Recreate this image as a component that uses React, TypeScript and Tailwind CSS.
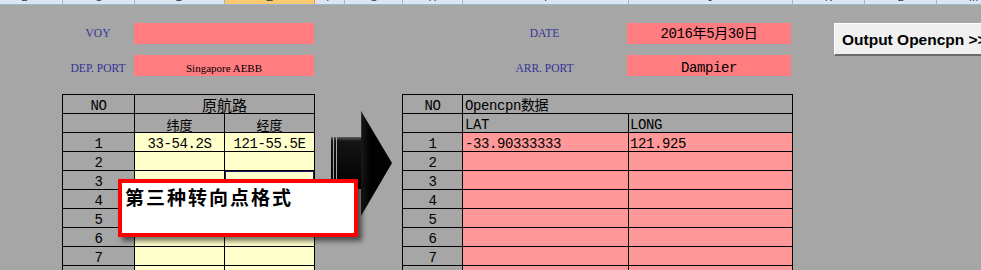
import React from 'react';

const mono =
  "font-['Liberation_Mono','Noto_Sans_CJK_SC',monospace] text-[14px] tracking-[-0.4px] leading-[14px] text-black whitespace-nowrap";
const cjk = "font-['Noto_Sans_CJK_SC',sans-serif] text-black whitespace-nowrap";
const label =
  "font-['Liberation_Serif',serif] text-[11.5px] text-[#333399] text-center whitespace-nowrap";

const headCols = [
  { l: 'B', c: 'w-[63px] pr-[12px]' },
  { l: 'C', c: 'w-[72px]' },
  { l: 'D', c: 'w-[90px]' },
  { l: 'E', c: 'w-[90px]', sel: true },
  { l: 'F', c: 'w-[30px]' },
  { l: 'G', c: 'w-[58px]' },
  { l: 'H', c: 'w-[60px]' },
  { l: 'I', c: 'w-[166px]' },
  { l: 'J', c: 'w-[164px]' },
  { l: 'K', c: 'w-[72px]' },
  { l: 'L', c: 'w-[72px]' },
  { l: 'M', c: 'w-[74px]' },
];

const rows = [1, 2, 3, 4, 5, 6, 7, 8];

function ColumnHeader() {
  return (
    <div className="flex h-[5px] overflow-hidden border-b border-[#9eb6ce] bg-[#dce6f2]">
      {headCols.map((c) => (
        <div
          key={c.l}
          className={`${c.c} shrink-0 overflow-hidden border-r text-center font-['Liberation_Sans',sans-serif] text-[11px] leading-[11px] text-[#1e395b] ${
            c.sel ? 'bg-[#f9c970] border-[#f29436]' : 'border-[#9eb6ce]'
          }`}
        >
          <div className="-mt-[8px]">{c.l}</div>
        </div>
      ))}
    </div>
  );
}

function TopArea() {
  return (
    <div className="flex">
      <div className="flex flex-col gap-[11px] pt-[18px]">
        <div className="flex h-[21px]">
          <div className="w-[62px] shrink-0" />
          <div className={`w-[72px] shrink-0 leading-[21px] ${label}`}>VOY</div>
          <div className="w-[180px] shrink-0 bg-[#ff7c80]" />
          <div className="w-[148px] shrink-0" />
          <div className={`w-[165px] shrink-0 leading-[21px] ${label}`}>DATE</div>
          <div
            className={`flex w-[164px] shrink-0 items-center justify-center bg-[#ff7c80] pt-[1px] ${mono}`}
          >
            2016年5月30日
          </div>
        </div>
        <div className="flex h-[21px]">
          <div className="w-[62px] shrink-0" />
          <div className={`w-[72px] shrink-0 pt-[6px] leading-[14px] ${label}`}>DEP. PORT</div>
          <div className="flex w-[180px] shrink-0 items-end justify-center bg-[#ff7c80] pb-[2px] font-['Liberation_Serif',serif] text-[11px] leading-[11px] text-black whitespace-nowrap">
            Singapore AEBB
          </div>
          <div className="w-[148px] shrink-0" />
          <div className={`w-[165px] shrink-0 pt-[6px] leading-[14px] ${label}`}>ARR. PORT</div>
          <div className={`w-[164px] shrink-0 bg-[#ff7c80] pt-[6px] text-center ${mono}`}>Dampier</div>
        </div>
      </div>
      <div className="ml-[43px] mt-[18px] flex h-[33px] w-[160px] shrink-0 items-center border-l border-t border-b-2 border-l-white border-t-white border-b-[#6b6b6b] bg-[#f0f0f0] pl-[7px] pt-[1px] font-['Liberation_Sans',sans-serif] text-[15.5px] font-bold text-black whitespace-nowrap">
        Output Opencpn &gt;&gt;
      </div>
    </div>
  );
}

function Table1() {
  return (
    <div className="w-[253px] shrink-0 border-l border-t border-black">
      <div className="flex h-[19px] border-b border-black">
        <div className={`w-[72px] shrink-0 border-r border-black pt-[4px] text-center ${mono}`}>NO</div>
        <div className={`w-[180px] shrink-0 border-r border-black pt-[2px] text-center text-[15px] leading-[15px] ${cjk}`}>
          原航路
        </div>
      </div>
      <div className="flex h-[19px] border-b border-black">
        <div className="w-[72px] shrink-0 border-r border-black" />
        <div className={`w-[90px] shrink-0 border-r border-black pt-[4px] text-center text-[13px] leading-[13px] ${cjk}`}>
          纬度
        </div>
        <div className={`w-[90px] shrink-0 border-r border-black pt-[4px] text-center text-[13px] leading-[13px] ${cjk}`}>
          经度
        </div>
      </div>
      {rows.map((n) => (
        <div key={n} className="flex h-[19px] border-b border-black">
          <div className={`w-[72px] shrink-0 border-r border-black pt-[4px] text-center ${mono}`}>{n}</div>
          <div className={`w-[90px] shrink-0 border-r border-black bg-[#ffffcc] pt-[4px] text-center ${mono}`}>
            {n === 1 ? '33-54.2S' : ''}
          </div>
          <div
            className={`w-[90px] shrink-0 border-r border-black bg-[#ffffcc] pt-[4px] text-center ${mono} ${
              n === 3 ? 'shadow-[inset_0_0_0_1px_#1b1b6b]' : ''
            }`}
          >
            {n === 1 ? '121-55.5E' : ''}
          </div>
        </div>
      ))}
    </div>
  );
}

function Table2() {
  return (
    <div className="w-[391px] shrink-0 border-l border-t border-black">
      <div className="flex h-[19px] border-b border-black">
        <div className={`w-[60px] shrink-0 border-r border-black pt-[4px] text-center ${mono}`}>NO</div>
        <div className={`w-[330px] shrink-0 border-r border-black pl-[2px] pt-[4px] ${mono}`}>Opencpn数据</div>
      </div>
      <div className="flex h-[19px] border-b border-black">
        <div className="w-[60px] shrink-0 border-r border-black" />
        <div className={`w-[166px] shrink-0 border-r border-black pl-[2px] pt-[4px] ${mono}`}>LAT</div>
        <div className={`w-[164px] shrink-0 border-r border-black pl-[1px] pt-[4px] ${mono}`}>LONG</div>
      </div>
      {rows.map((n) => (
        <div key={n} className="flex h-[19px] border-b border-black">
          <div className={`w-[60px] shrink-0 border-r border-black pt-[4px] text-center ${mono}`}>{n}</div>
          <div className={`w-[166px] shrink-0 border-r border-black bg-[#ff9999] pl-[2px] pt-[4px] ${mono}`}>
            {n === 1 ? '-33.90333333' : ''}
          </div>
          <div className={`w-[164px] shrink-0 border-r border-black bg-[#ff9999] pl-[1px] pt-[4px] ${mono}`}>
            {n === 1 ? '121.925' : ''}
          </div>
        </div>
      ))}
    </div>
  );
}

function Arrow() {
  return (
    <svg width="62" height="106" viewBox="0 0 62 106" className="block">
      <defs>
        <linearGradient id="bodyGrad" x1="0" y1="0" x2="0" y2="1">
          <stop offset="0" stopColor="#5e5e5e" />
          <stop offset="0.08" stopColor="#141414" />
          <stop offset="1" stopColor="#000000" />
        </linearGradient>
        <linearGradient id="headGrad" x1="0" y1="0" x2="1" y2="0">
          <stop offset="0" stopColor="#1a1a1a" />
          <stop offset="0.3" stopColor="#000000" />
          <stop offset="1" stopColor="#050505" />
        </linearGradient>
      </defs>
      <rect x="0" y="26" width="2" height="52" fill="url(#bodyGrad)" />
      <rect x="3" y="26" width="2" height="52" fill="url(#bodyGrad)" />
      <rect x="6" y="26" width="25" height="52" fill="url(#bodyGrad)" />
      <polygon points="30,0 61,52 30,105" fill="url(#headGrad)" />
      <line x1="30.5" y1="2" x2="30.5" y2="26" stroke="#333333" strokeWidth="1" />
    </svg>
  );
}

export default function App() {
  return (
    <div className="relative h-[270px] w-[981px] overflow-hidden bg-[#a6a6a6]">
      <ColumnHeader />
      <TopArea />
      <div className="mt-[18px] flex items-start">
        <div className="w-[62px] shrink-0" />
        <Table1 />
        <div className="w-[87px] shrink-0 pl-[16px] pt-[17px]">
          <Arrow />
        </div>
        <Table2 />
      </div>
      <div className="absolute left-[118px] top-[179px] z-10 h-[58px] w-[240px] border-[4px] border-[#ff0000] bg-white pl-[3px] pt-[3px] shadow-[4px_4px_5px_rgba(0,0,0,0.55)]">
        <div className={`text-[19px] font-bold leading-[22px] tracking-[2px] ${cjk}`}>第三种转向点格式</div>
      </div>
    </div>
  );
}
